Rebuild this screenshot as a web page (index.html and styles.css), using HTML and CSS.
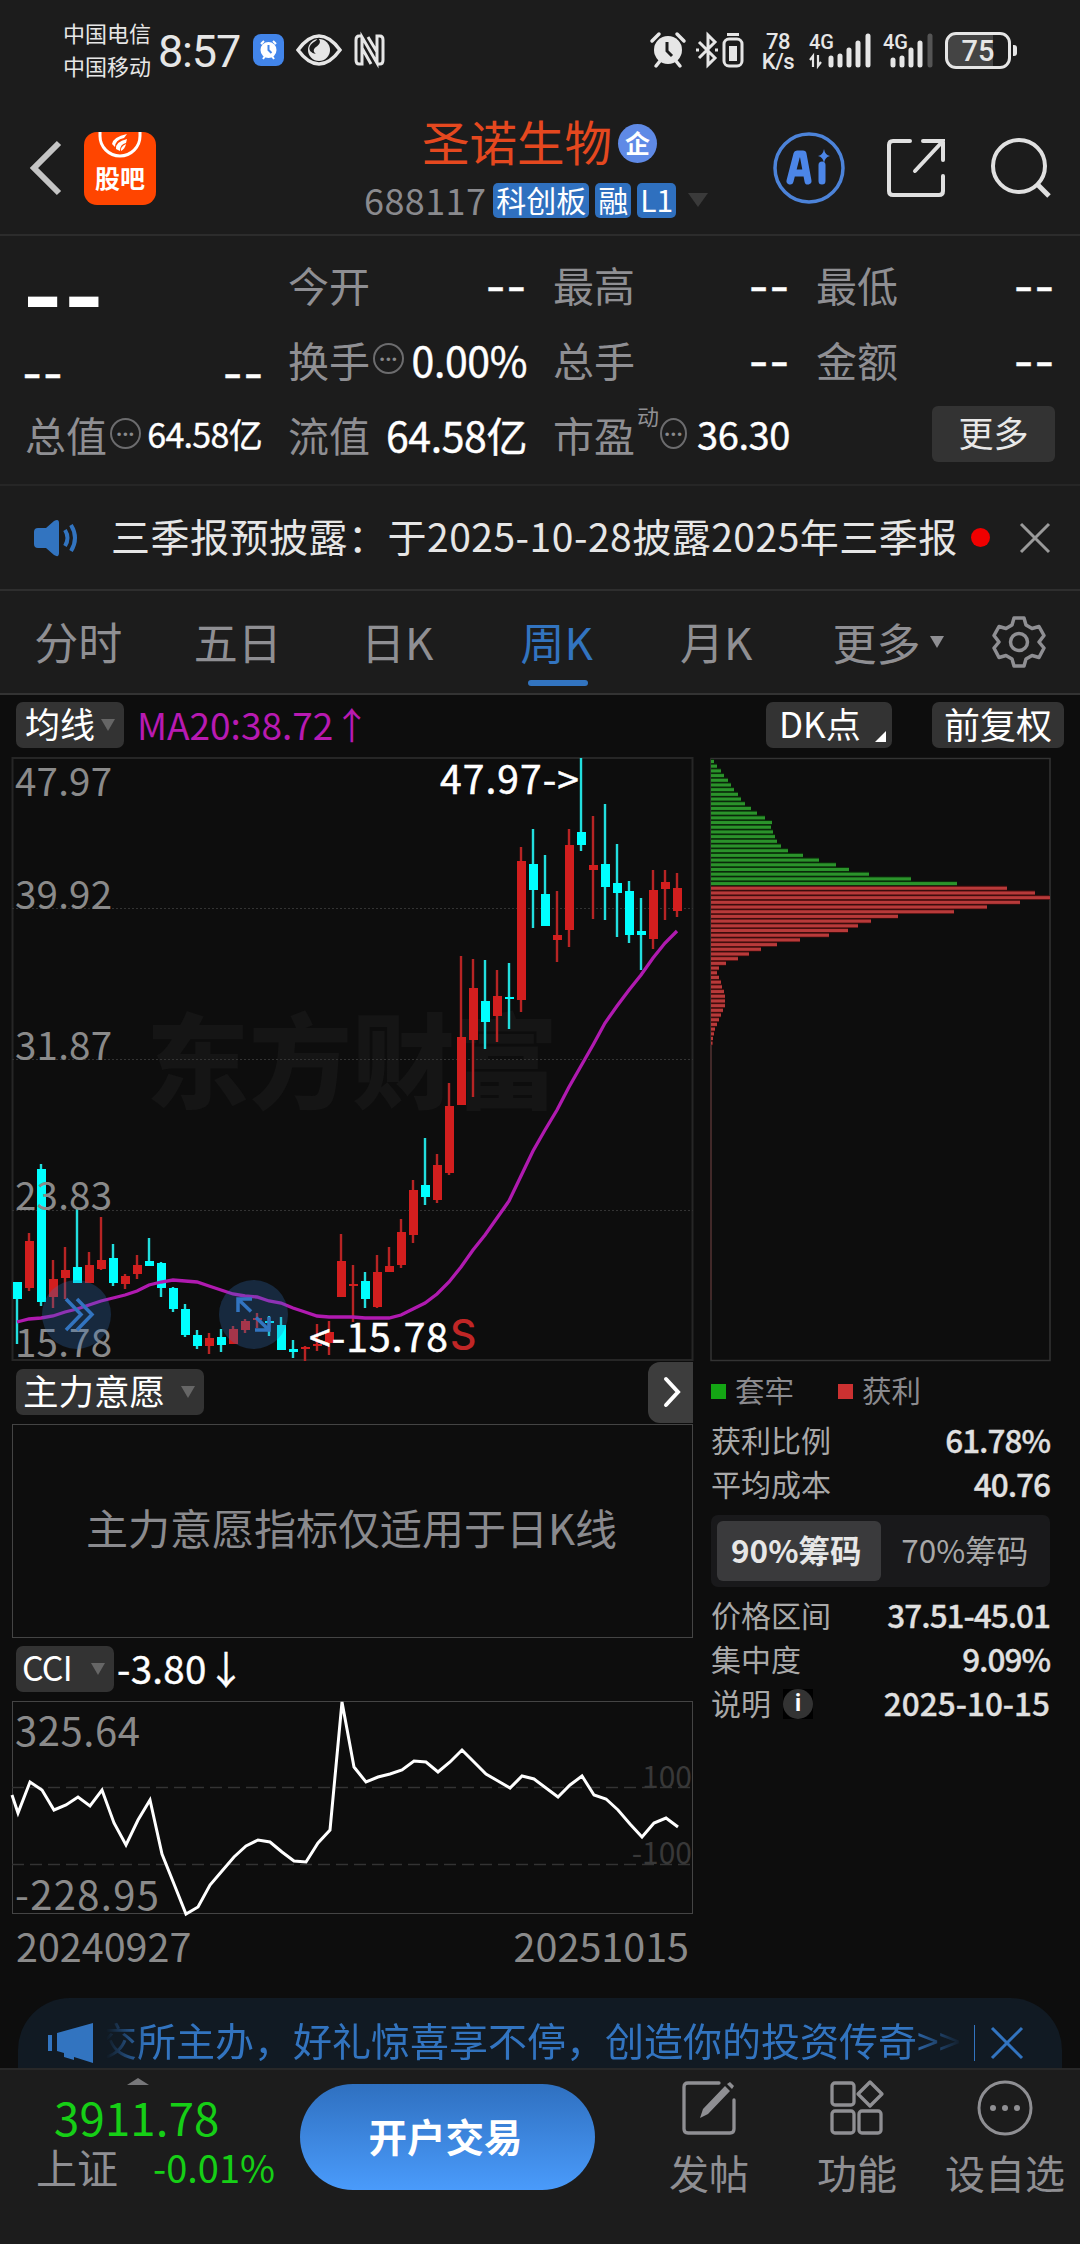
FILE: index.html
```html
<!DOCTYPE html>
<html lang="zh-CN">
<head>
    <meta charset="UTF-8">
    <meta name="viewport" content="width=device-width, initial-scale=1.0">
    <title>圣诺生物 688117</title>
    <link rel="stylesheet" href="styles.css">
</head>
<body>
    <div class="page">
        <div class="status-bar">
            <div class="carriers"><span>中国电信</span><span>中国移动</span></div>
            <span class="time">8:57</span>
            <svg class="st-app" width="31" height="32" viewBox="0 0 31 32">
                <rect width="31" height="32" rx="8" fill="#4285ea"/>
                <circle cx="15.5" cy="16" r="8" fill="#fff"/>
                <path d="M8 10l3-3M23 10l-3-3M10 25l2-3M21 25l-2-3" stroke="#fff" stroke-width="2"/>
                <path d="M15.500 11v5l3 3" stroke="#4285ea" stroke-width="2" fill="none"/>
            </svg>
            <svg class="st-eye" width="46" height="32" viewBox="0 0 46 32">
                <path d="M2 16C10 5 17 2 23 2s13 3 21 14C36 27 29 30 23 30S10 27 2 16z" fill="none" stroke="#e6e6e6" stroke-width="3.500"/>
                <circle cx="23" cy="16" r="11" fill="#e6e6e6"/>
                <path d="M22 4c4 4 1 7-2 9s-3 5 0 7c-5-1-8-4-6-8s6-4 8-8z" fill="#1c1c1c"/>
            </svg>
            <svg class="st-nfc" width="31" height="32" viewBox="0 0 31 32">
                <path d="M8 2H5Q2 2 2 6v20q0 4 3 4h3V3l15 26V2h3q3 0 3 4v20q0 4-3 4h-3M14 3l9 15M8 14l9 16" fill="none" stroke="#e6e6e6" stroke-width="3"/>
            </svg>
            <div class="status-right">
                <svg width="36" height="36" viewBox="0 0 36 36">
                    <circle cx="18" cy="18" r="14" fill="#e6e6e6"/>
                    <path d="M2 9l7-7M34 9l-7-7M6 34l4-5M30 34l-4-5" stroke="#e6e6e6" stroke-width="3.500" stroke-linecap="round"/>
                    <path d="M17 10v9l5 5" fill="none" stroke="#1c1c1c" stroke-width="3"/>
                </svg>
                <svg class="st-bt" width="49" height="36" viewBox="0 0 49 36">
                    <path d="M3 10l16 16-7 7V3l7 7L3 26" fill="none" stroke="#e6e6e6" stroke-width="3"/>
                    <path d="M0 18h3M19 18h3" stroke="#e6e6e6" stroke-width="3"/>
                    <rect x="28" y="7" width="18" height="27" rx="5" fill="none" stroke="#e6e6e6" stroke-width="3"/>
                    <path d="M31 2.500h12" stroke="#e6e6e6" stroke-width="3"/>
                    <rect x="33" y="14" width="8" height="15" fill="#e6e6e6"/>
                </svg>
                <div class="speed"><span>78</span><span>K/s</span></div>
                <svg class="st-sig1" width="63" height="36" viewBox="0 0 63 36">
                    <text x="0" y="17" class="sig-text" textLength="25" lengthAdjust="spacingAndGlyphs">4G</text>
                    <path d="M4 35V24L1 28M9 23v11l3-4" fill="none" stroke="#e6e6e6" stroke-width="2.200"/>
                    <path d="M22 33v-7M31 33V24M40 33V18M49 33V11M59 33V4" stroke="#e6e6e6" stroke-width="5" stroke-linecap="round"/>
                </svg>
                <svg class="st-sig2" width="51" height="36" viewBox="0 0 51 36">
                    <text x="0" y="17" class="sig-text" textLength="25" lengthAdjust="spacingAndGlyphs">4G</text>
                    <path d="M10 33v-5M19 33V26M28 33V18M37 33V11" stroke="#e6e6e6" stroke-width="5" stroke-linecap="round"/>
                    <path d="M47 33V4" stroke="#555" stroke-width="5" stroke-linecap="round"/>
                </svg>
                <div class="battery"><span>75</span></div>
                <i class="battery-tip"></i>
            </div>
        </div>

        <div class="header">
            <svg class="back" width="32" height="56" viewBox="0 0 32 56"><path d="M29 3L4 28l25 25" fill="none" stroke="#c4c4c4" stroke-width="6"/></svg>
            <div class="guba">
                <svg width="44" height="28" viewBox="0 0 44 28">
                    <path d="M2 0v4a20 20 0 0 0 40 0V0" fill="none" stroke="#fff" stroke-width="3"/>
                    <path d="M14 12q1-7 15-10l-3 4Q17 8 17 15zM18 17q-1-7 11-10l-1 4q-6 1-6 8zM23 19q-1-4 5-7-1 5-5 7z" fill="#fff"/>
                </svg>
                <span>股吧</span>
            </div>
            <div class="stock">
                <div class="stock-name">圣诺生物<span class="qi">企</span></div>
                <div class="stock-code">
                    <span class="code">688117</span>
                    <span class="tag">科创板</span><span class="tag">融</span><span class="tag">L1</span>
                    <i class="tri tri-dark"></i>
                </div>
            </div>
            <svg class="ai" width="74" height="74" viewBox="0 0 74 74">
                <circle cx="37" cy="37" r="34" fill="none" stroke="#4c83d9" stroke-width="3.500"/>
                <path d="M18 50l7-27h6l5 27M20.500 42h14M50 34v16" fill="none" stroke="#4c86e8" stroke-width="7" stroke-linejoin="round" stroke-linecap="round"/>
                <path d="M52 18q1 6 6 7-5 1-6 7-1-6-6-7 5-1 6-7z" fill="#4c86e8"/>
            </svg>
            <svg class="share" width="60" height="60" viewBox="0 0 60 60">
                <path d="M24 3H7Q3 3 3 7v46q0 4 4 4h46q4 0 4-4V38M37 3h20v19M57 3L29 33" fill="none" stroke="#e0e0e0" stroke-width="4" stroke-linecap="round"/>
            </svg>
            <svg class="search" width="62" height="62" viewBox="0 0 62 62">
                <circle cx="29" cy="29" r="26" fill="none" stroke="#e0e0e0" stroke-width="4"/>
                <path d="M48 48l11 11" stroke="#e0e0e0" stroke-width="5"/>
            </svg>
        </div>

        <div class="quote">
            <div class="cell price"><span class="dash-big">--</span></div>
            <div class="cell"><label>今开</label><b class="dash">--</b></div>
            <div class="cell"><label>最高</label><b class="dash">--</b></div>
            <div class="cell"><label>最低</label><b class="dash">--</b></div>

            <div class="cell change"><b class="dash">--</b><b class="dash">--</b></div>
            <div class="cell"><label>换手</label><i class="more-dot">•••</i><b>0.00%</b></div>
            <div class="cell"><label>总手</label><b class="dash">--</b></div>
            <div class="cell"><label>金额</label><b class="dash">--</b></div>

            <div class="cell"><label>总值</label><i class="more-dot">•••</i><b class="small">64.58亿</b></div>
            <div class="cell"><label>流值</label><b>64.58亿</b></div>
            <div class="cell"><label>市盈</label><sup>动</sup><i class="more-dot">•••</i><b class="mid">36.30</b></div>
            <div class="cell"><button class="more-btn">更多</button></div>
        </div>

        <div class="notice">
            <svg width="46" height="38" viewBox="0 0 46 38">
                <path d="M5 9h8L21 2q5-3 5 2v30q0 5-5 2l-8-7H5q-4 0-4-4V13q0-4 4-4z" fill="#3274c0"/>
                <path d="M32 11q5 8 0 16M38 6q8 13 0 26" fill="none" stroke="#3274c0" stroke-width="4"/>
            </svg>
            <span class="notice-text">三季报预披露：于2025-10-28披露2025年三季报</span>
            <i class="red-dot"></i>
            <svg class="close" width="32" height="32" viewBox="0 0 32 32"><path d="M2 2l28 28M30 2L2 30" stroke="#9a9a9a" stroke-width="3"/></svg>
        </div>

        <div class="tabs">
            <span>分时</span>
            <span>五日</span>
            <span>日K</span>
            <span class="active">周K</span>
            <span>月K</span>
            <span class="tab-more">更多<i class="tri"></i></span>
            <svg width="54" height="54" viewBox="0 0 54 54">
                <path d="M22 3h10l2 7 6 3.500 7-2 5 9-5 6.500 5 6-5 9.500-7-2-6 3.500-2 7H22l-2-7-6-3.500-7 2-5-9.500 5-6-5-6.500 5-9 7 2L20 10z" fill="none" stroke="#8f8f93" stroke-width="3.500" stroke-linejoin="round"/>
                <circle cx="27" cy="27" r="8.500" fill="none" stroke="#8f8f93" stroke-width="3.500"/>
            </svg>
        </div>

        <div class="toolbar">
            <span class="btn btn-ma">均线<i class="tri tri-gray"></i></span>
            <span class="ma">MA20:38.72↑</span>
            <span class="btn btn-dk">DK点<i class="corner"></i></span>
            <span class="btn btn-fq">前复权</span>
        </div>

        <div class="charts">
            <div class="left">
                <svg id="kline" width="681" height="604" viewBox="12 757 681 604">
                    <text x="146" y="1101" class="watermark" textLength="412">东方财富</text>
                    <rect x="12.500" y="758" width="680" height="602" fill="none" stroke="#262626" stroke-width="2"/>
                    <path d="M12 908.500H693M12 1059.500H693M12 1210.500H693" stroke="#333" stroke-width="1" stroke-dasharray="2 2"/>
                    <g id="candles"></g>
                    <polyline id="ma20" fill="none" stroke="#b01ab0" stroke-width="3.300"/>
                    <g class="axis">
                        <text x="15" y="796" textLength="97">47.97</text>
                        <text x="15" y="909" textLength="97">39.92</text>
                        <text x="15" y="1060" textLength="97">31.87</text>
                        <text x="15" y="1210" textLength="97">23.83</text>
                        <text x="15" y="1357" textLength="97">15.78</text>
                    </g>
                    <text x="440" y="794" class="mark" textLength="139">47.97-&gt;</text>
                    <text x="309" y="1352" class="mark" textLength="139">&lt;-15.78</text>
                    <text x="450" y="1349" class="sell">S</text>
                    <circle cx="76.500" cy="1314.500" r="34.500" class="pad"/>
                    <circle cx="253.500" cy="1314.500" r="34.500" class="pad"/>
                    <path d="M66 1299l15 15.500-15 15.500M77 1299l15 15.500-15 15.500" class="pad-icon"/>
                    <path d="M238 1312v-13h14M238 1299l13 12.500M255 1330h14v-13M269 1330l-13-12.500" class="pad-icon"/>
                </svg>
                <div class="sub-head">
                    <span class="btn btn-zl">主力意愿<i class="tri tri-gray"></i></span>
                    <span class="next"><svg width="18" height="32" viewBox="0 0 18 32"><path d="M3 3l12 13L3 29" fill="none" stroke="#fff" stroke-width="4" stroke-linecap="round"/></svg></span>
                </div>
                <div class="empty">主力意愿指标仅适用于日K线</div>
                <div class="sub-head cci-head">
                    <span class="btn btn-cci">CCI<i class="tri tri-gray"></i></span>
                    <span class="cci-value">-3.80↓</span>
                </div>
                <svg id="cci" width="681" height="214" viewBox="12 1701 681 214">
                    <rect x="12.500" y="1701.500" width="680" height="212" fill="none" stroke="#444"/>
                    <path d="M12 1787.500H693M12 1864.500H693" stroke="#333" stroke-width="1.500" stroke-dasharray="12 6"/>
                    <g class="level" text-anchor="end">
                        <text x="692" y="1788">100</text>
                        <text x="692" y="1864">-100</text>
                    </g>
                    <g class="axis axis-cci">
                        <text x="15" y="1746" textLength="125">325.64</text>
                        <text x="15" y="1910" textLength="144">-228.95</text>
                    </g>
                    <polyline id="cci-line" fill="none" stroke="#fff" stroke-width="3"/>
                </svg>
                <div class="dates"><span>20240927</span><span>20251015</span></div>
            </div>
            <div class="right">
                <svg id="chips" width="341" height="604" viewBox="710 757 341 604">
                    <rect x="711" y="758.500" width="339" height="602" fill="none" stroke="#333" stroke-width="1.500"/>
                    <g id="chip-bars"></g>
                </svg>
                <div class="legend">
                    <i class="sq green"></i><span>套牢</span>
                    <i class="sq red"></i><span>获利</span>
                </div>
                <div class="info"><span>获利比例</span><b>61.78%</b></div>
                <div class="info"><span>平均成本</span><b>40.76</b></div>
                <div class="toggle"><span class="on">90%筹码</span><span class="off">70%筹码</span></div>
                <div class="info"><span>价格区间</span><b>37.51-45.01</b></div>
                <div class="info"><span>集中度</span><b>9.09%</b></div>
                <div class="info"><span class="explain">说明<i class="info-i"><em>i</em></i></span><b class="date">2025-10-15</b></div>
            </div>
        </div>

        <div class="promo">
            <svg width="46" height="40" viewBox="0 0 46 40"><path d="M0 12h4v16H0zM9 10L45 0v40l-19-6v3l-10-3v-4l-7-2z" fill="#3274c0"/></svg>
            <span class="promo-text">交所主办，好礼惊喜享不停，创造你的投资传奇&gt;&gt;</span>
            <i class="bar"></i>
            <svg width="34" height="34" viewBox="0 0 34 34"><path d="M2 2l30 30M32 2L2 32" stroke="#3274c0" stroke-width="3"/></svg>
        </div>

        <div class="bottom">
            <div class="index">
                <i class="tri-up"></i>
                <div class="index-value">3911.78</div>
                <div class="index-row"><span>上证</span><b>-0.01%</b></div>
            </div>
            <div class="trade">开户交易</div>
            <div class="action a1">
                <svg width="56" height="56" viewBox="0 0 56 56">
                    <path d="M38 3H7Q3 3 3 7v42q0 4 4 4h42q4 0 4-4V20" fill="none" stroke="#8f8f93" stroke-width="3.300" stroke-linecap="round"/>
                    <path d="M19 38l3-9L44 6l5 5-22 23zM46 4l3-2 4 4-2 3z" fill="#8f8f93"/>
                </svg>
                <span>发帖</span>
            </div>
            <div class="action a2">
                <svg width="54" height="54" viewBox="0 0 54 54" fill="none" stroke="#8f8f93" stroke-width="3.300">
                    <rect x="2" y="2" width="22" height="22" rx="3"/>
                    <rect x="2" y="30" width="22" height="22" rx="3"/>
                    <rect x="29" y="30" width="22" height="22" rx="3"/>
                    <path d="M40 1l12 12-12 12-12-12z" stroke-linejoin="round"/>
                </svg>
                <span>功能</span>
            </div>
            <div class="action a3">
                <svg width="56" height="56" viewBox="0 0 56 56">
                    <circle cx="28" cy="28" r="26" fill="none" stroke="#8f8f93" stroke-width="3"/>
                    <circle cx="16" cy="28" r="3" fill="#8f8f93"/><circle cx="28" cy="28" r="3" fill="#8f8f93"/><circle cx="40" cy="28" r="3" fill="#8f8f93"/>
                </svg>
                <span>设自选</span>
            </div>
        </div>
    </div>
    <script src="script.js"></script>
</body>
</html>
```
FILE: styles.css
```css
* {
    box-sizing: border-box;
}
body {
    margin: 0;
    background-color: #0d0d0d;
    color: #fff;
    font-family: "Noto Sans CJK SC", sans-serif;
}
i, em {
    font-style: normal;
}
svg {
    display: block;
    flex: none;
    overflow: visible;
}
.page {
    width: 1080px;
    height: 2244px;
    overflow: hidden;
    display: flex;
    flex-direction: column;
}

/* status bar */
.status-bar {
    height: 100px;
    flex: none;
    background-color: #1c1c1c;
    display: flex;
    align-items: center;
    padding-left: 63px;
    color: #e6e6e6;
}
.carriers {
    display: flex;
    flex-direction: column;
    font-size: 22px;
    line-height: 33px;
    padding-bottom: 3px;
    width: 95px;
}
.time {
    font-family: Roboto, sans-serif;
    font-size: 45px;
    letter-spacing: -1.2px;
    line-height: 50px;
    width: 95px;
    padding-top: 3px;
}
.st-eye {
    margin-left: 12px;
}
.st-nfc {
    margin-left: 12px;
}
.status-right {
    display: flex;
    align-items: center;
    margin-left: 265px;
}
.st-bt {
    margin-left: 10px;
}
.speed {
    font-family: Roboto, sans-serif;
    font-size: 22px;
    font-weight: 500;
    line-height: 20px;
    width: 36px;
    margin-left: 15px;
    padding-top: 3px;
    display: flex;
    flex-direction: column;
    align-items: center;
    letter-spacing: -0.5px;
}
.sig-text {
    font-family: Roboto, sans-serif;
    font-weight: 500;
    font-size: 21px;
    fill: #e6e6e6;
}
.st-sig1 {
    margin-left: 13px;
}
.st-sig2 {
    margin-left: 11px;
}
.battery {
    width: 66px;
    height: 37px;
    margin-left: 11px;
    border: 3px solid #e6e6e6;
    border-radius: 11px;
    background: linear-gradient(90deg, #444 75%, #1c1c1c 75%);
    font-family: Roboto, sans-serif;
    font-weight: 500;
    font-size: 29px;
    line-height: 32px;
    text-align: center;
}
.battery-tip {
    width: 4px;
    height: 11px;
    margin-left: 2px;
    background-color: #e6e6e6;
    border-radius: 0 3px 3px 0;
}

/* header */
.header {
    height: 136px;
    flex: none;
    background-color: #1c1c1c;
    border-bottom: 2px solid #2c2c2c;
    display: flex;
    align-items: center;
    padding: 2px 0 0 30px;
}
.guba {
    width: 72px;
    height: 73px;
    margin-left: 22px;
    border-radius: 13px;
    background-color: #ff4500;
    display: flex;
    flex-direction: column;
    align-items: center;
    font-size: 25px;
    font-weight: 700;
    line-height: 34px;
}
.stock {
    width: 408px;
    margin-left: 208px;
    display: flex;
    flex-direction: column;
    gap: 6px;
}
.stock-name {
    display: flex;
    align-items: center;
    font-size: 47.5px;
    line-height: 58px;
    color: #e5481f;
    padding-left: 58px;
}
.qi {
    width: 39px;
    height: 39px;
    margin: 4px 0 0 6px;
    border-radius: 50%;
    background-color: #5f8ae6;
    color: #fff;
    font-size: 25px;
    font-weight: 700;
    line-height: 37px;
    text-align: center;
}
.stock-code {
    display: flex;
    align-items: center;
    height: 48px;
}
.code {
    font-size: 36px;
    line-height: 36px;
    letter-spacing: 0.4px;
    color: #8a8a8e;
    margin-right: 7px;
    padding-bottom: 2px;
}
.tag {
    height: 35px;
    margin-right: 6px;
    padding: 0 3px;
    border-radius: 5px;
    background-color: #2f70bf;
    font-size: 30px;
    line-height: 32px;
}
.tri {
    display: inline-block;
    border-left: 7.5px solid transparent;
    border-right: 7.5px solid transparent;
    border-top: 12px solid #8f8f93;
}
.tri-dark {
    border-left-width: 10.5px;
    border-right-width: 10.5px;
    border-top-width: 14px;
    border-top-color: #3a3a3a;
    margin-left: 6px;
}
.tri-gray {
    border-top-color: #666;
}
.share {
    margin-left: 40px;
}
.search {
    margin-left: 44px;
}

/* quote */
.quote {
    height: 250px;
    flex: none;
    background-color: #1c1c1c;
    border-bottom: 2px solid #262626;
    display: grid;
    grid-template-columns: 237px 239px 237px 239px;
    grid-template-rows: 75px 75px 75px;
    column-gap: 26px;
    padding: 10px 0 0 25px;
}
.cell {
    display: flex;
    align-items: center;
    white-space: nowrap;
}
.cell label {
    font-size: 41px;
    line-height: 50px;
    color: #8f8f93;
}
.cell b {
    margin-left: auto;
    font-weight: 400;
    font-size: 41px;
    letter-spacing: -0.4px;
    line-height: 50px;
    -webkit-text-stroke: 0.4px #fff;
}
.cell b.small {
    font-size: 34px;
    letter-spacing: -0.7px;
}
.cell b.mid {
    font-size: 38px;
    margin-left: 10px;
    letter-spacing: -0.4px;
}
.cell b.dash {
    font-family: Inter, sans-serif;
    font-size: 44px;
    font-weight: 400;
    letter-spacing: 0.5px;
    padding-top: 6px;
}
.dash-big {
    font-family: Inter, sans-serif;
    font-size: 88px;
    font-weight: 700;
    line-height: 60px;
    padding-top: 25px;
    margin-left: -3px;
}
.cell.change b.dash {
    margin-left: -3px;
    padding-top: 0;
}
.cell.change {
    justify-content: space-between;
    padding-top: 31px;
    margin-right: -2px;
}
.more-dot {
    width: 31px;
    height: 31px;
    margin-left: 3px;
    border: 2px solid #6c6c6e;
    border-radius: 50%;
    color: #8a8a8c;
    font-family: Roboto, sans-serif;
    font-size: 17px;
    letter-spacing: 0.5px;
    line-height: 28px;
    text-align: center;
    display: flex;
    justify-content: center;
}
.cell sup {
    font-size: 22px;
    line-height: 24px;
    color: #8f8f93;
    align-self: flex-start;
    margin-top: 7px;
    margin-left: 2px;
}
.cell sup + .more-dot {
    margin-left: 1px;
}
.more-btn {
    margin: 0 0 0 auto;
    width: 123px;
    height: 56px;
    border: none;
    border-radius: 6px;
    background-color: #333;
    color: #e8e8e8;
    font-family: inherit;
    font-size: 35px;
    line-height: 50px;
    padding: 0 0 3px;
}

/* notice */
.notice {
    height: 105px;
    flex: none;
    background-color: #1c1c1c;
    border-bottom: 2px solid #2e2e2e;
    display: flex;
    align-items: center;
    padding: 0 29px 0 33px;
}
.notice-text {
    width: 850px;
    margin-left: 32px;
    font-size: 39px;
    letter-spacing: 0.5px;
    line-height: 50px;
    padding-bottom: 6px;
    color: #e6e6e6;
    white-space: nowrap;
}
.red-dot {
    width: 19px;
    height: 19px;
    margin-left: 10px;
    border-radius: 50%;
    background-color: #f00000;
}
.close {
    margin-left: auto;
}

/* period tabs */
.tabs {
    height: 104px;
    flex: none;
    background-color: #1c1c1c;
    border-bottom: 2px solid #333;
    display: flex;
    align-items: center;
}
.tabs span {
    width: 159.5px;
    font-size: 44px;
    line-height: 100px;
    height: 102px;
    color: #8f8f93;
    display: flex;
    justify-content: center;
    padding-right: 3px;
    position: relative;
}
.tabs .active {
    color: #3274c0;
}
.tabs .active::after {
    content: "";
    position: absolute;
    left: 50%;
    bottom: 7px;
    width: 60px;
    height: 6px;
    margin-left: -30px;
    border-radius: 3px;
    background-color: #3274c0;
}
.tabs .tab-more {
    width: 194px;
    padding-right: 13px;
    line-height: 96px;
    align-items: center;
}
.tab-more .tri {
    margin-left: 9px;
}

/* chart toolbar */
.toolbar {
    height: 62px;
    flex: none;
    display: flex;
    align-items: center;
    padding: 0 16px 2px;
}
.btn {
    height: 46px;
    border-radius: 7px;
    background-color: #333;
    display: flex;
    align-items: center;
    font-size: 35px;
    line-height: 40px;
    padding: 0 9px 4px;
    white-space: nowrap;
}
.btn .tri {
    margin: 4px 0 0 auto;
}
.btn-ma {
    width: 108px;
}
.ma {
    margin-left: 13px;
    font-size: 37px;
    line-height: 44px;
    padding-bottom: 3px;
    color: #b81ab2;
}
.btn-dk {
    width: 126px;
    margin-left: auto;
    padding-left: 13px;
    padding-right: 6px;
}
.btn .corner {
    margin: 26px 0 0 auto;
    border-left: 11px solid transparent;
    border-bottom: 11px solid #fff;
}
.btn-fq {
    width: 132px;
    margin-left: 40px;
    font-size: 36px;
    padding-left: 12px;
}

/* charts */
.charts {
    height: 1241px;
    flex: none;
    display: grid;
    grid-template-columns: 681px 341px;
    column-gap: 17px;
    padding-left: 12px;
}
.watermark {
    font-size: 103px;
    font-weight: 900;
    fill: #151515;
}
.axis text {
    font-size: 38.5px;
    fill: #8a8a8a;
}
.axis-cci text {
    font-size: 40px;
}
.mark {
    font-size: 39px;
    font-weight: 400;
    fill: #fff;
    stroke: #fff;
    stroke-width: 0.5px;
}
.sell {
    font-family: Inter, sans-serif;
    font-size: 41px;
    font-weight: 500;
    fill: #c02626;
}
.pad {
    fill: #3274c0;
    fill-opacity: 0.28;
}
.pad-icon {
    fill: none;
    stroke: #3274c0;
    stroke-width: 3.5;
}
.level text {
    font-size: 30px;
    fill: #383838;
}
.sub-head {
    height: 63px;
    display: flex;
    align-items: center;
    justify-content: space-between;
    padding-left: 4px;
    padding-bottom: 1px;
}
.btn-zl {
    width: 188px;
    font-size: 35.5px;
    padding-left: 7px;
}
.next {
    width: 45px;
    height: 61px;
    border-radius: 12px 0 0 12px;
    background-color: #3d3d3d;
    display: flex;
    align-items: center;
    justify-content: center;
    padding-left: 3px;
}
.empty {
    height: 214px;
    border: 1px solid #444;
    display: flex;
    align-items: center;
    justify-content: center;
    font-size: 42px;
    line-height: 50px;
    color: #8a8a8e;
    padding-bottom: 9px;
    padding-right: 2px;
}
.cci-head {
    justify-content: flex-start;
}
.btn-cci {
    width: 98px;
    font-size: 34px;
    letter-spacing: -0.8px;
    padding-left: 6px;
    padding-right: 9px;
}
.cci-value {
    margin-left: 3px;
    font-size: 38.5px;
    line-height: 44px;
    padding-bottom: 5px;
    letter-spacing: 0.3px;
    -webkit-text-stroke: 0.4px #fff;
}
.dates {
    display: flex;
    justify-content: space-between;
    font-size: 39.5px;
    line-height: 60px;
    color: #8a8a8a;
    padding: 0 4px;
}

/* chip distribution */
.right {
    display: flex;
    flex-direction: column;
    padding-right: 1px;
}
.legend {
    height: 57px;
    display: flex;
    align-items: center;
    font-size: 29.5px;
    line-height: 34px;
    color: #8a8a8e;
    padding: 1px 0 0 1px;
}
.legend span {
    margin: 0 44px 3px 9px;
}
.sq {
    width: 15px;
    height: 15px;
    margin-top: 3px;
}
.green {
    background-color: #14a514;
}
.red {
    background-color: #cc3131;
}
.info {
    height: 44px;
    display: flex;
    align-items: center;
    justify-content: space-between;
    font-size: 30px;
    line-height: 36px;
    color: #a8a8a8;
    padding: 0 0 2px 1px;
}
.info b {
    font-size: 31.5px;
    font-weight: 500;
    color: #e0e0e0;
    letter-spacing: -1px;
    -webkit-text-stroke: 0.3px #e0e0e0;
}
.info b.date {
    letter-spacing: 0;
}
.toggle {
    height: 72px;
    margin: 9px 0 6px 1px;
    padding: 6px;
    border-radius: 7px;
    background-color: #19191b;
    display: flex;
    font-size: 31.5px;
    line-height: 57px;
    color: #a8a8a8;
}
.toggle span {
    flex: 1;
    text-align: center;
}
.toggle .on {
    border-radius: 6px;
    background-color: #3a3a3c;
    color: #e6e6e6;
    font-weight: 700;
    padding-right: 5px;
}
.toggle .off {
    padding-left: 5px;
}
.explain {
    display: flex;
    align-items: center;
}
.info-i {
    width: 30px;
    height: 30px;
    margin: 4px 0 0 12px;
    background-color: #000;
}
.info-i em {
    display: block;
    height: 30px;
    border-radius: 50%;
    background-color: #333;
    color: #fff;
    font-family: Roboto, sans-serif;
    font-size: 23px;
    font-weight: 700;
    line-height: 30px;
    text-align: center;
}

/* promo strip */
.promo {
    height: 70px;
    flex: none;
    margin: 0 18px;
    border-radius: 52px 52px 0 0;
    background-color: #111a23;
    display: flex;
    align-items: flex-start;
    padding: 25px 0 0 30px;
    color: #3274c0;
}
.promo-text {
    width: 862px;
    margin: -12px 0 0 4px;
    font-size: 39px;
    line-height: 56px;
    white-space: nowrap;
    -webkit-mask-image: linear-gradient(90deg, transparent 8px, #000 48px, #000 810px, transparent 865px);
    mask-image: linear-gradient(90deg, transparent 8px, #000 48px, #000 810px, transparent 865px);
}
.bar {
    width: 1px;
    height: 36px;
    margin: 2px 15px 0 14px;
    background-color: #3274c0;
}
.promo svg:last-child {
    margin-top: 3px;
}

/* bottom bar */
.bottom {
    height: 176px;
    flex: none;
    background-color: #1c1c1c;
    border-top: 2px solid #282828;
    display: flex;
    align-items: flex-start;
}
.index {
    width: 300px;
    padding-top: 8px;
    color: #16cf16;
}
.tri-up {
    display: block;
    width: 0;
    margin-left: 127px;
    border-left: 11px solid transparent;
    border-right: 11px solid transparent;
    border-bottom: 7px solid #77777a;
}
.index-value {
    padding-left: 54px;
    font-size: 45.5px;
    letter-spacing: 0.2px;
    line-height: 50px;
    margin: 6px 0 5px;
}
.index-row {
    display: flex;
    align-items: center;
    padding-left: 36px;
    height: 44px;
}
.index-row span {
    font-size: 41px;
    line-height: 44px;
    color: #8f8f93;
    margin-top: -4px;
}
.index-row b {
    margin-left: 35px;
    font-size: 38px;
    font-weight: 400;
    line-height: 44px;
    margin-top: -3px;
}
.trade {
    width: 295px;
    height: 106px;
    margin-top: 14px;
    border-radius: 53px;
    background: linear-gradient(#2f70c0, #4a9bfb);
    font-size: 38.5px;
    font-weight: 700;
    line-height: 102px;
    text-align: center;
    padding-right: 4px;
}
.action {
    display: flex;
    flex-direction: column;
    align-items: center;
    padding-top: 10px;
    font-size: 40px;
    line-height: 60px;
    color: #8f8f93;
}
.action span {
    margin-top: 6px;
}
.a1 {
    margin-left: 74px;
}
.a2 {
    margin-left: 68px;
}
.a2 svg {
    margin: 1px 0;
}
.a3 {
    margin-left: 48px;
}
```
FILE: script.js
```js
const NS = 'http://www.w3.org/2000/svg';
const STEP = 12;
const FIRST_X = 17;

// [direction, high, low, body top, body bottom], 1 = up week, 0 = down week
const candles = [
    [0, 1282, 1344, 1282, 1299], [1, 1233, 1291, 1241, 1288], [0, 1164, 1306, 1169, 1302], [1, 1260, 1308, 1279, 1297],
    [1, 1247, 1299, 1270, 1278], [0, 1209, 1283, 1267, 1283], [1, 1252, 1283, 1265, 1283], [1, 1217, 1270, 1260, 1269],
    [0, 1244, 1286, 1258, 1283], [1, 1274, 1289, 1276, 1284], [1, 1255, 1279, 1265, 1274], [0, 1238, 1266, 1261, 1266],
    [0, 1262, 1297, 1263, 1288], [0, 1287, 1312, 1288, 1309], [0, 1304, 1337, 1309, 1335], [0, 1330, 1349, 1335, 1346],
    [1, 1333, 1354, 1338, 1346], [0, 1329, 1352, 1337, 1345], [1, 1326, 1344, 1329, 1344], [1, 1319, 1333, 1321, 1330],
    [1, 1313, 1328, 1318, 1320], [0, 1316, 1336, 1321, 1323], [0, 1317, 1350, 1325, 1350], [0, 1340, 1358, 1349, 1352],
    [1, 1346, 1361, 1347, 1349], [1, 1324, 1351, 1344, 1346], [1, 1321, 1355, 1332, 1343], [1, 1234, 1297, 1261, 1297],
    [1, 1265, 1322, 1284, 1286], [0, 1272, 1308, 1281, 1299], [1, 1255, 1308, 1272, 1307], [1, 1247, 1272, 1266, 1272],
    [1, 1219, 1268, 1232, 1265], [1, 1180, 1243, 1190, 1235], [0, 1138, 1205, 1185, 1197], [1, 1154, 1203, 1165, 1200],
    [1, 1083, 1175, 1106, 1173], [1, 956, 1105, 1037, 1105], [1, 959, 1097, 988, 1040], [0, 960, 1049, 1001, 1022],
    [1, 970, 1042, 996, 1016], [0, 963, 1029, 997, 999], [1, 847, 1012, 861, 1000], [0, 829, 928, 864, 890],
    [0, 855, 926, 894, 926], [1, 891, 962, 935, 940], [1, 829, 947, 845, 930], [0, 758, 851, 832, 845],
    [1, 816, 919, 865, 870], [0, 804, 920, 864, 887], [0, 844, 937, 883, 893], [0, 881, 943, 891, 935],
    [0, 898, 970, 931, 935], [1, 870, 949, 890, 939], [1, 870, 920, 882, 889], [1, 873, 917, 888, 911]
];

const ma20 = [
    1322, 1319, 1318, 1316, 1312, 1309, 1305, 1301, 1298, 1295, 1291, 1285, 1282, 1280, 1281, 1282, 1286, 1290, 1294,
    1296, 1297, 1301, 1303, 1308, 1312, 1316, 1317, 1317, 1317, 1318, 1318, 1318, 1315, 1309, 1303, 1294, 1282, 1267,
    1250, 1235, 1218, 1201, 1176, 1151, 1130, 1110, 1087, 1066, 1045, 1023, 1006, 990, 975, 958, 943, 931
];

const cci = [
    1813, 1782, 1790, 1810, 1805, 1797, 1806, 1790, 1823, 1845, 1820, 1800, 1854, 1884, 1914, 1907, 1885, 1871, 1857,
    1846, 1840, 1842, 1852, 1861, 1862, 1843, 1830, 1702, 1767, 1782, 1777, 1774, 1770, 1761, 1762, 1772, 1762, 1750,
    1762, 1774, 1781, 1788, 1776, 1779, 1788, 1797, 1785, 1776, 1795, 1799, 1810, 1824, 1837, 1823, 1818, 1827
];

const trapped = [3, 6, 10, 13, 17, 20, 23, 27, 30, 34, 40, 46, 54, 61, 60, 62, 64, 66, 70, 77, 92, 108, 125, 138, 158, 200, 246];
const profit = [
    296, 324, 339, 309, 276, 243, 187, 160, 147, 137, 118, 89, 66, 50, 38, 27, 15, 8, 6, 8, 10, 11, 13, 14, 14, 14, 12,
    10, 8, 6, 4, 3, 2, 1.5
];

function rect(parent, x, y, w, h, fill) {
    const el = document.createElementNS(NS, 'rect');
    el.setAttribute('x', x);
    el.setAttribute('y', y);
    el.setAttribute('width', w);
    el.setAttribute('height', h);
    el.setAttribute('fill', fill);
    parent.appendChild(el);
}

const candleGroup = document.getElementById('candles');
candles.forEach(([up, high, low, top, bottom], i) => {
    const x = FIRST_X + i * STEP;
    rect(candleGroup, x - 1.2, high, 2.4, low - high, up ? '#b72424' : '#22dede');
    rect(candleGroup, x - 4, top, 9, bottom - top, up ? '#d21e1e' : '#00ffff');
});

const toPoints = (list, shift = 0) => list.map((y, i) => `${FIRST_X + shift + i * STEP},${y}`).join(' ');
document.getElementById('ma20').setAttribute('points', toPoints(ma20));
document.getElementById('cci-line').setAttribute('points', '12,1795 ' + toPoints(cci, 1));

const chipGroup = document.getElementById('chip-bars');
const BIN = 4.695;
[...trapped, ...profit].forEach((w, i) => {
    const green = i < trapped.length;
    const y = 760 + i * BIN;
    rect(chipGroup, 711, y - 1, w, BIN, green ? '#0b310b' : '#4a0f0f');
    rect(chipGroup, 711, y, w, 3, green ? '#2b932b' : '#b83a3a');
});
// thin tail of low-price chips
rect(chipGroup, 710.5, 1045, 1, 255, '#5c2a2a');
```
